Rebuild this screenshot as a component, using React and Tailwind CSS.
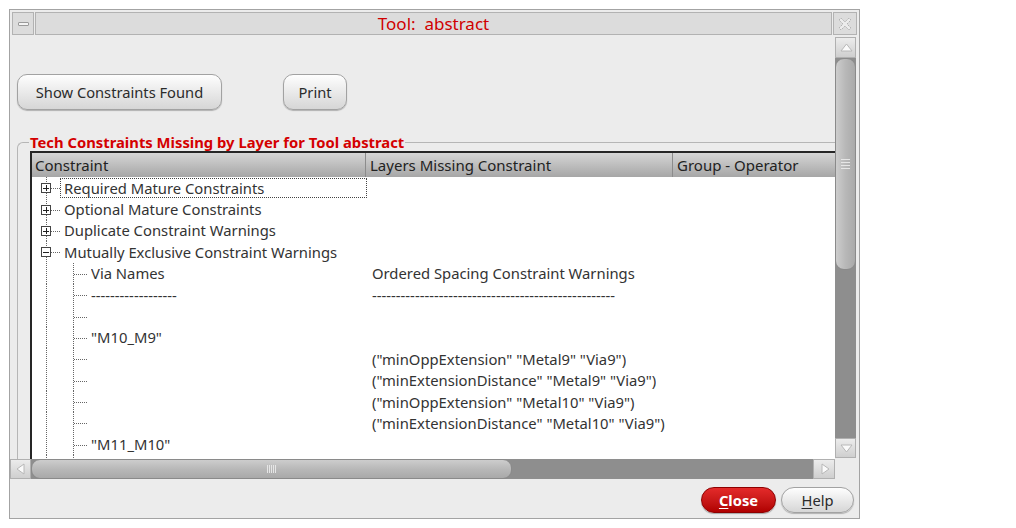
import React from "react";

const rows = [
  { kind: "parent", sign: "+", text: "Required Mature Constraints", focus: true },
  { kind: "parent", sign: "+", text: "Optional Mature Constraints" },
  { kind: "parent", sign: "+", text: "Duplicate Constraint Warnings" },
  { kind: "parent", sign: "-", text: "Mutually Exclusive Constraint Warnings" },
  { kind: "child", a: "Via Names", b: "Ordered Spacing Constraint Warnings" },
  { kind: "child", a: "------------------", b: "---------------------------------------------------" },
  { kind: "child", a: "", b: "" },
  { kind: "child", a: '"M10_M9"', b: "" },
  { kind: "child", a: "", b: '("minOppExtension" "Metal9" "Via9")' },
  { kind: "child", a: "", b: '("minExtensionDistance" "Metal9" "Via9")' },
  { kind: "child", a: "", b: '("minOppExtension" "Metal10" "Via9")' },
  { kind: "child", a: "", b: '("minExtensionDistance" "Metal10" "Via9")' },
  { kind: "child", a: '"M11_M10"', b: "" },
  { kind: "child", a: "", b: "" },
];

function ParentGutter({ sign }) {
  return (
    <svg width="28" height="21" className="shrink-0" shapeRendering="crispEdges">
      <line x1="14.5" y1="0" x2="14.5" y2="21" stroke="#666" strokeDasharray="1 1" />
      <rect x="9.5" y="6.5" width="9" height="9" fill="#fff" stroke="#444" />
      <line x1="11" y1="11" x2="17" y2="11" stroke="#222" />
      {sign === "+" && <line x1="14" y1="8" x2="14" y2="14" stroke="#222" />}
      <line x1="19" y1="11.5" x2="28" y2="11.5" stroke="#666" strokeDasharray="1 1" />
    </svg>
  );
}

function ChildGutter() {
  return (
    <svg width="59" height="21" className="shrink-0" shapeRendering="crispEdges">
      <line x1="14.5" y1="0" x2="14.5" y2="21" stroke="#666" strokeDasharray="1 1" />
      <line x1="41.5" y1="0" x2="41.5" y2="21" stroke="#666" strokeDasharray="1 1" />
      <line x1="42" y1="11.5" x2="56" y2="11.5" stroke="#666" strokeDasharray="1 1" />
    </svg>
  );
}

function Arrow({ dir }) {
  const pts = {
    up: "5,13 10.5,6 16,13",
    down: "5,7 10.5,14 16,7",
    left: "13,5 6,10 13,15",
    right: "8,5 15,10 8,15",
  }[dir];
  return (
    <svg width="21" height="20" className="block">
      <polygon points={pts} fill="#fafafa" stroke="#b8b8b8" strokeWidth="1" />
    </svg>
  );
}

function VScroll() {
  return (
    <div className="w-[21px] flex flex-col py-[1px]">
      <div className="h-[21px] border border-[#b0b0b0] bg-linear-to-b from-[#ececec] to-[#cfcfcf] flex items-center justify-center">
        <Arrow dir="up" />
      </div>
      <div className="flex-1 flex flex-col bg-[#8e8e8e]">
        <div className="h-[212px] rounded-[9px] border border-[#8a8a8a] bg-linear-to-r from-[#cdcdcd] via-[#b8b8b8] to-[#a9a9a9] flex flex-col items-center justify-center gap-[2px]">
          <div className="w-[9px] h-[1px] bg-[#e6e6e6]" />
          <div className="w-[9px] h-[1px] bg-[#e6e6e6]" />
          <div className="w-[9px] h-[1px] bg-[#e6e6e6]" />
          <div className="w-[9px] h-[1px] bg-[#e6e6e6]" />
        </div>
      </div>
      <div className="h-[20px] border border-[#b0b0b0] bg-linear-to-b from-[#ececec] to-[#cfcfcf] flex items-center justify-center">
        <Arrow dir="down" />
      </div>
    </div>
  );
}

function HScroll() {
  return (
    <div className="h-[20px] flex">
      <div className="w-[825px] flex">
        <div className="w-[21px] border border-[#b0b0b0] bg-linear-to-b from-[#ececec] to-[#cfcfcf] flex items-center justify-center">
          <Arrow dir="left" />
        </div>
        <div className="flex-1 flex bg-[#8e8e8e]">
          <div className="w-[481px] rounded-[9px] border border-[#8a8a8a] bg-linear-to-b from-[#cdcdcd] via-[#b8b8b8] to-[#a9a9a9] flex items-center justify-center gap-[1px]">
            <div className="w-[1px] h-[8px] bg-[#e6e6e6]" />
            <div className="w-[1px] h-[8px] bg-[#e6e6e6]" />
            <div className="w-[1px] h-[8px] bg-[#e6e6e6]" />
            <div className="w-[1px] h-[8px] bg-[#e6e6e6]" />
            <div className="w-[1px] h-[8px] bg-[#e6e6e6]" />
          </div>
        </div>
        <div className="w-[22px] border border-[#b0b0b0] bg-linear-to-b from-[#ececec] to-[#cfcfcf] flex items-center justify-center">
          <Arrow dir="right" />
        </div>
      </div>
    </div>
  );
}

function TitleBar() {
  return (
    <div className="h-[26px] flex px-[2px] pt-[2px] pb-[1px] gap-[1px]">
      <div className="w-[22px] border border-[#b2b2b2] bg-[#dcdcdc] flex items-center justify-center">
        <div className="w-[11px] h-[4px] rounded-[1px] border border-[#9a9a9a] bg-[#f4f4f4]" />
      </div>
      <div className="flex-1 border border-[#b2b2b2] bg-[#dcdcdc] flex items-center justify-center">
        <span className="text-[17px] leading-none text-[#d00000] whitespace-pre">Tool:  abstract</span>
      </div>
      <div className="w-[24px] border border-[#b2b2b2] bg-[#dcdcdc] flex items-center justify-center">
        <svg width="14" height="14" viewBox="0 0 14 14">
          <path d="M1 3 L3 1 L7 5 L11 1 L13 3 L9 7 L13 11 L11 13 L7 9 L3 13 L1 11 L5 7 Z" fill="#ececec" stroke="#b4b4b4" strokeWidth="1" strokeDasharray="2 1" />
        </svg>
      </div>
    </div>
  );
}

function TreeTable() {
  return (
    <div className="border-l-2 border-t-2 border-[#262626] w-[870px]">
      <div className="h-[24px] flex bg-linear-to-b from-[#d6d6d6] to-[#a6a6a6] text-[15px] text-[#222]">
        <div className="w-[334px] border-r border-[#8c8c8c] pl-[3px] flex items-center">Constraint</div>
        <div className="w-[307px] border-r border-[#8c8c8c] pl-[4px] flex items-center">Layers Missing Constraint</div>
        <div className="flex-1 pl-[4px] flex items-center">Group - Operator</div>
      </div>
      <div className="bg-white h-[300px] text-[14.8px] text-[#333]">
        {rows.map((r, i) =>
          r.kind === "parent" ? (
            <div key={i} className="h-[21.4px] flex items-center">
              <ParentGutter sign={r.sign} />
              <div
                className={
                  "w-[307px] h-[20px] pl-[3px] flex items-center whitespace-nowrap border border-dotted " +
                  (r.focus ? "border-[#444]" : "border-transparent")
                }
              >
                {r.text}
              </div>
            </div>
          ) : (
            <div key={i} className="h-[21.4px] flex items-center whitespace-nowrap">
              <ChildGutter />
              <div className="w-[275px] overflow-hidden">{r.a}</div>
              <div className="pl-[6px] overflow-hidden">{r.b}</div>
            </div>
          )
        )}
      </div>
    </div>
  );
}

function Content() {
  return (
    <div className="w-[825px] overflow-hidden">
      <div className="pt-[38px] pl-[7px] flex">
        <button className="w-[205px] h-[36px] rounded-[10px] border border-[#a2a2a2] bg-linear-to-b from-[#fefefe] to-[#d6d6d6] shadow-[0_1px_1px_rgba(0,0,0,0.25)] text-[14.7px] text-[#2b2b2b]">
          Show Constraints Found
        </button>
        <button className="ml-[61px] w-[64px] h-[36px] rounded-[10px] border border-[#a2a2a2] bg-linear-to-b from-[#fefefe] to-[#d6d6d6] shadow-[0_1px_1px_rgba(0,0,0,0.25)] text-[14.7px] text-[#2b2b2b]">
          Print
        </button>
      </div>
      <div className="mt-[25px] ml-[7px] w-[900px]">
        <div className="h-[14px] flex">
          <div className="w-[12px] h-[7px] self-end border-l border-t border-[#b6b6b6] rounded-tl-[6px]" />
          <span className="px-[1px] text-[14.8px] leading-[14px] font-bold text-[#d40000] whitespace-nowrap">
            Tech Constraints Missing by Layer for Tool abstract
          </span>
          <div className="flex-1 h-[7px] self-end border-t border-[#b6b6b6]" />
        </div>
        <div className="border-l border-[#b6b6b6] pl-[12px] pt-[2px]">
          <TreeTable />
        </div>
      </div>
    </div>
  );
}

function Footer() {
  return (
    <div className="flex-1 flex justify-end items-start pt-[8px] pr-[5px] gap-[5px]">
      <button className="w-[75px] h-[26px] rounded-full border border-[#8e0000] bg-linear-to-b from-[#e42a2a] to-[#b00000] text-white font-bold text-[14.7px] shadow-[0_1px_1px_rgba(0,0,0,0.3)]">
        <span className="underline underline-offset-2">C</span>lose
      </button>
      <button className="w-[73px] h-[26px] rounded-full border border-[#a2a2a2] bg-linear-to-b from-[#fefefe] to-[#d6d6d6] text-[#2b2b2b] text-[14.7px] shadow-[0_1px_1px_rgba(0,0,0,0.25)]">
        <span className="underline underline-offset-2">H</span>elp
      </button>
    </div>
  );
}

export default function App() {
  return (
    <div className="w-[1016px] h-[528px] bg-white pt-[9px] pl-[9px] font-['Noto_Sans'] text-[#2b2b2b]">
      <div className="w-[851px] h-[510px] border border-[#a3a3a3] bg-[#ececec] flex flex-col">
        <TitleBar />
        <div className="h-[423px] flex">
          <Content />
          <VScroll />
        </div>
        <HScroll />
        <Footer />
      </div>
    </div>
  );
}
